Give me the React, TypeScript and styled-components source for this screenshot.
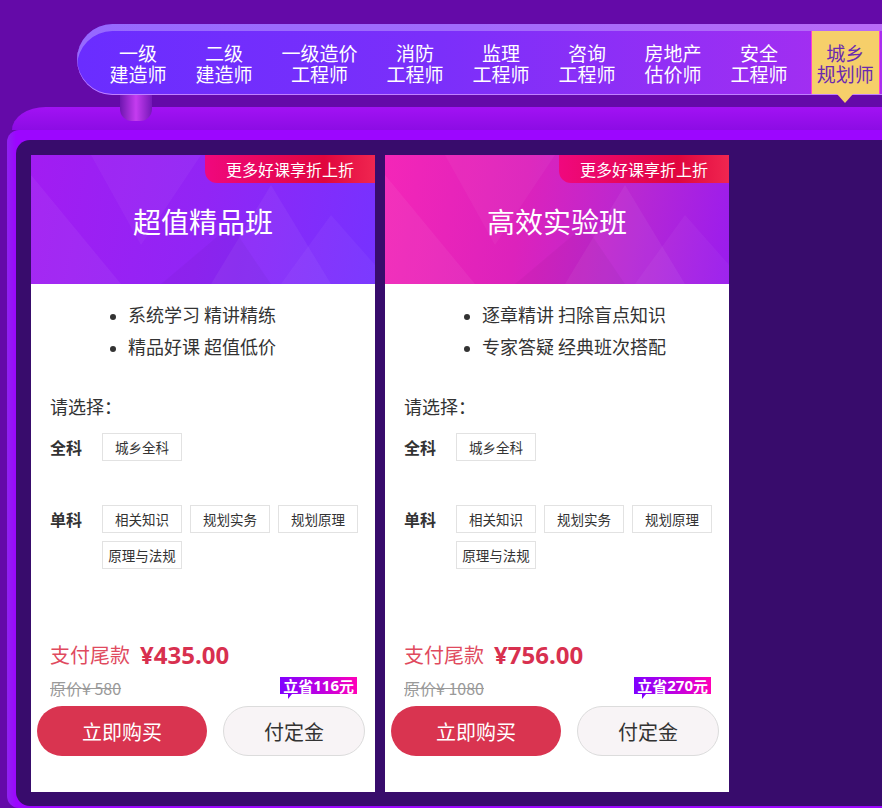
import React from "react";
import styled, { createGlobalStyle } from "styled-components";

const GlobalStyle = createGlobalStyle`
  html, body {
    margin: 0;
    padding: 0;
    background: #640aa8;
  }
  * { box-sizing: border-box; }
`;

const FONT = `"Noto Sans CJK SC", "Noto Sans", "Liberation Sans", sans-serif`;

const navItems = [
  ["一级", "建造师"],
  ["二级", "建造师"],
  ["一级造价", "工程师"],
  ["消防", "工程师"],
  ["监理", "工程师"],
  ["咨询", "工程师"],
  ["房地产", "估价师"],
  ["安全", "工程师"],
  ["城乡", "规划师"],
];

interface Course {
  title: string;
  theme: "violet" | "pink";
  points: string[];
  price: string;
  original: string;
  save: string;
}

const courses: Course[] = [
  {
    title: "超值精品班",
    theme: "violet",
    points: ["系统学习 精讲精练", "精品好课 超值低价"],
    price: "¥435.00",
    original: "原价¥ 580",
    save: "116",
  },
  {
    title: "高效实验班",
    theme: "pink",
    points: ["逐章精讲 扫除盲点知识", "专家答疑 经典班次搭配"],
    price: "¥756.00",
    original: "原价¥ 1080",
    save: "270",
  },
];

const singles = ["相关知识", "规划实务", "规划原理", "原理与法规"];

const App: React.FC = () => {
  return (
    <Page>
      <GlobalStyle />
      <NavWrap>
        <NavBar>
          {navItems.map(([a, b], i) => (
            <NavItem key={a + b} $active={i === navItems.length - 1}>
              <NavLine>{a}</NavLine>
              <NavLine>{b}</NavLine>
            </NavItem>
          ))}
        </NavBar>
      </NavWrap>
      <Connector />
      <Ledge />
      <Frame>
        <Panel>
          {courses.map((c) => (
            <Card key={c.title}>
              <Header $theme={c.theme}>
                <Shapes viewBox="0 0 344 129" preserveAspectRatio="none">
                  <polygon points="0,20 90,129 0,129" fill="rgba(255,255,255,0.05)" />
                  <polygon points="60,0 170,0 110,90" fill="rgba(255,255,255,0.04)" />
                  <polygon points="180,129 240,30 300,129" fill="rgba(255,255,255,0.05)" />
                  <polygon points="250,129 300,60 344,110 344,129" fill="rgba(255,255,255,0.04)" />
                  <polygon points="130,129 200,70 240,129" fill="rgba(0,0,0,0.03)" />
                </Shapes>
                <Title>{c.title}</Title>
                <Ribbon>更多好课享折上折</Ribbon>
              </Header>
              <Body>
                <Points>
                  {c.points.map((p) => (
                    <li key={p}>{p}</li>
                  ))}
                </Points>
                <Prompt>请选择：</Prompt>
                <OptionRow>
                  <OptionLabel>全科</OptionLabel>
                  <Tags>
                    <Tag>城乡全科</Tag>
                  </Tags>
                </OptionRow>
                <OptionRow $gap={44}>
                  <OptionLabel>单科</OptionLabel>
                  <Tags>
                    {singles.map((s) => (
                      <Tag key={s}>{s}</Tag>
                    ))}
                  </Tags>
                </OptionRow>
              </Body>
              <Footer>
                <PriceRow>
                  <PriceLabel>支付尾款</PriceLabel>
                  <Price>{c.price}</Price>
                </PriceRow>
                <OrigRow>
                  <Original>{c.original}</Original>
                  <Save>
                    立省<b>{c.save}</b>元
                  </Save>
                </OrigRow>
              </Footer>
              <Buttons>
                <BuyButton>立即购买</BuyButton>
                <DepositButton>付定金</DepositButton>
              </Buttons>
            </Card>
          ))}
        </Panel>
      </Frame>
    </Page>
  );
};

const Page = styled.div`
  width: 882px;
  height: 808px;
  overflow: hidden;
  background: #640aa8;
  font-family: ${FONT};
`;

const NavWrap = styled.div`
  padding: 24px 0 0 77px;
`;

const NavBar = styled.nav`
  height: 71px;
  display: flex;
  align-items: stretch;
  gap: 17px;
  padding: 7px 0 1px 26.5px;
  border-radius: 36px 0 0 36px;
  background: linear-gradient(90deg, #6a2dff 0%, #7b2ffa 45%, #a82ef0 100%);
  box-shadow: inset 0 7px 0 rgba(205, 180, 255, 0.45), inset 0 -1px 0 #c080ff;
`;

const NavItem = styled.div<{ $active?: boolean }>`
  position: relative;
  display: flex;
  flex-direction: column;
  justify-content: center;
  align-items: center;
  padding: 0 6px;
  font-size: 19px;
  color: ${(p) => (p.$active ? "#6a2ab0" : "#ffffff")};
  background: ${(p) => (p.$active ? "#f6cf6a" : "transparent")};
  box-shadow: ${(p) => (p.$active ? "inset 1px 0 0 #ff3fd0, inset -1px 0 0 #ff3fd0" : "none")};
  white-space: nowrap;

  &::after {
    content: "";
    display: ${(p) => (p.$active ? "block" : "none")};
    position: absolute;
    left: 50%;
    bottom: -9px;
    margin-left: -8px;
    border-left: 8px solid transparent;
    border-right: 8px solid transparent;
    border-top: 9px solid #f6cf6a;
  }
`;

const NavLine = styled.span`
  display: block;
  height: 21px;
  line-height: 21px;
`;

const Connector = styled.div`
  position: relative;
  z-index: 1;
  width: 32px;
  height: 26px;
  margin: 0 0 -14px 120px;
  border-radius: 0 0 12px 12px;
  background: linear-gradient(90deg, #6e16b0 0%, #c53cf0 50%, #7418b8 100%);
`;

const Ledge = styled.div`
  height: 23px;
  margin-left: 12px;
  border-top-left-radius: 44px 30px;
  background: linear-gradient(180deg, #a212f4 0%, #8c0ce4 100%);
`;

const Frame = styled.div`
  margin-left: 7px;
  padding: 10px 0 2px 9px;
  border-radius: 12px 0 0 12px;
  background: linear-gradient(90deg, #8f22f0 0px, #9c06ff 9px);
  background-color: #9c00ff;
`;

const Panel = styled.div`
  height: 666px;
  display: flex;
  gap: 10px;
  padding: 15px 0 14px 15px;
  border-radius: 14px 0 0 14px;
  background: #380c6c;
`;

const Card = styled.div`
  width: 344px;
  display: flex;
  flex-direction: column;
  background: #ffffff;
`;

const Header = styled.div<{ $theme: "violet" | "pink" }>`
  position: relative;
  height: 129px;
  display: flex;
  align-items: center;
  justify-content: center;
  overflow: hidden;
  background: ${(p) =>
    p.$theme === "violet"
      ? "linear-gradient(100deg, #a21cf2 0%, #9125f5 50%, #7632ff 100%)"
      : "linear-gradient(100deg, #f426b8 0%, #dc22bc 40%, #b828d2 70%, #9a1cee 100%)"};
`;

const Shapes = styled.svg`
  position: absolute;
  inset: 0;
  width: 100%;
  height: 100%;
`;

const Title = styled.h2`
  position: relative;
  margin: 2px 0 0;
  font-size: 28px;
  font-weight: 400;
  color: #ffffff;
`;

const Ribbon = styled.div`
  position: absolute;
  top: 0;
  right: 0;
  width: 170px;
  height: 28px;
  display: flex;
  align-items: center;
  justify-content: center;
  border-bottom-left-radius: 12px;
  background: linear-gradient(90deg, #f0087e 0%, #e0063e 70%, #f02650 100%);
  color: #ffffff;
  font-size: 16px;
`;

const Body = styled.div`
  flex: 1;
  padding: 14px 10px 0 19px;
  color: #333333;
`;

const Points = styled.ul`
  margin: 0;
  padding-left: 78px;
  font-size: 18px;
  line-height: 32px;
  color: #333333;

  li::marker {
    font-size: 15px;
  }
`;

const Prompt = styled.div`
  margin-top: 32px;
  font-size: 18px;
  line-height: 24px;
`;

const OptionRow = styled.div<{ $gap?: number }>`
  display: flex;
  margin-top: ${(p) => p.$gap ?? 15}px;
`;

const OptionLabel = styled.div`
  width: 52px;
  flex-shrink: 0;
  font-size: 16px;
  font-weight: 700;
  line-height: 28px;
`;

const Tags = styled.div`
  display: flex;
  flex-wrap: wrap;
  gap: 8px 8px;
`;

const Tag = styled.div`
  width: 80px;
  height: 28px;
  display: flex;
  align-items: center;
  justify-content: center;
  border: 1px solid #e2e2e2;
  font-size: 13.5px;
  color: #333333;
`;

const Footer = styled.div`
  padding: 0 18px 0 19px;
`;

const PriceRow = styled.div`
  display: flex;
  align-items: center;
  gap: 10px;
  height: 30px;
  line-height: 1;
`;

const PriceLabel = styled.span`
  font-size: 20px;
  color: #e04a5e;
`;

const Price = styled.span`
  font-family: "Open Sans", "Liberation Sans", sans-serif;
  font-size: 24px;
  font-weight: 700;
  color: #d8304f;
`;

const OrigRow = styled.div`
  display: flex;
  justify-content: space-between;
  align-items: flex-start;
  margin-top: 7px;
  height: 20px;
`;

const Original = styled.span`
  font-size: 16px;
  line-height: 22px;
  color: #9a9a9a;
  text-decoration: line-through;
`;

const Save = styled.span`
  position: relative;
  height: 17px;
  padding: 0 3px;
  display: flex;
  align-items: center;
  background: linear-gradient(90deg, #8000ff 0%, #c000e0 55%, #ff00b8 100%);
  color: #ffffff;
  font-size: 15px;
  font-weight: 700;
  line-height: 17px;

  b {
    font-family: "Open Sans", "Liberation Sans", sans-serif;
    font-weight: 700;
  }

  &::after {
    content: "";
    position: absolute;
    left: 8px;
    bottom: -5px;
    border-left: 4px solid #8000ff;
    border-right: 4px solid transparent;
    border-bottom: 5px solid transparent;
  }
`;

const Buttons = styled.div`
  display: flex;
  gap: 16px;
  margin: 9px 0 36px;
  padding: 0 10px 0 6px;
`;

const BaseButton = styled.button`
  height: 50px;
  border-radius: 25px;
  font-family: ${FONT};
  font-size: 20px;
  cursor: pointer;
`;

const BuyButton = styled(BaseButton)`
  width: 170px;
  border: none;
  background: #d93450;
  color: #ffffff;
`;

const DepositButton = styled(BaseButton)`
  flex: 1;
  border: 1px solid #dcdcdc;
  background: #f8f4f6;
  color: #333333;
`;

export default App;
